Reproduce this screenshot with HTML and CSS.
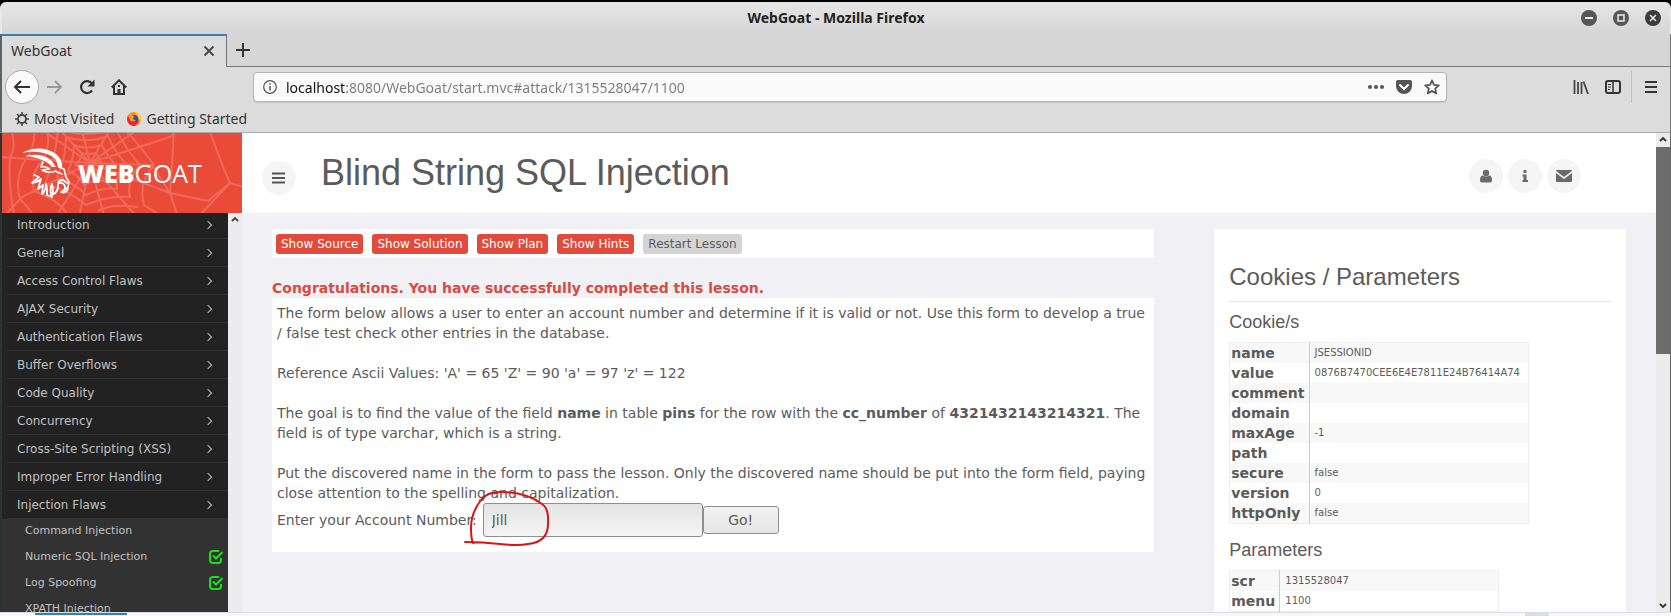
FILE: index.html
```
<!DOCTYPE html>
<html lang="en">
<head>
    <meta charset="UTF-8">
    <meta name="viewport" content="width=device-width, initial-scale=1.0">
    <title>WebGoat</title>
    <link rel="stylesheet" href="styles.css">
</head>
<body>

    <div class="window">
        <header class="titlebar">
            <span class="window-title">WebGoat - Mozilla Firefox</span>
            <div class="window-controls">
                <button aria-label="Minimize"><svg width="16" height="16" viewBox="0 0 16 16"><circle cx="8" cy="8" r="8" fill="#575757"/><path d="M4 8h8" stroke="#eee" stroke-width="2"/></svg></button>
                <button aria-label="Maximize"><svg width="16" height="16" viewBox="0 0 16 16"><circle cx="8" cy="8" r="8" fill="#575757"/><rect x="5" y="5" width="6" height="6" fill="none" stroke="#eee" stroke-width="1.5"/></svg></button>
                <button aria-label="Close"><svg width="16" height="16" viewBox="0 0 16 16"><circle cx="8" cy="8" r="8" fill="#3c3c3c"/><path d="M5 5l6 6M11 5l-6 6" stroke="#eee" stroke-width="1.5"/></svg></button>
            </div>
        </header>

        <div class="tabs">
            <div class="tab">
                <span>WebGoat</span>
                <button aria-label="Close tab"><svg width="12" height="12" viewBox="0 0 12 12"><path d="M1.500 1.500l9 9M10.500 1.500l-9 9" stroke="#444" stroke-width="1.800"/></svg></button>
            </div>
            <div class="tabs-rest">
                <button aria-label="New tab"><svg width="14" height="14" viewBox="0 0 14 14"><path d="M7 0v14M0 7h14" stroke="#333" stroke-width="2"/></svg></button>
            </div>
        </div>

        <div class="toolbar">
            <button class="back" aria-label="Back"><svg width="18" height="16" viewBox="0 0 18 16"><path d="M17 8H2M8 2L2 8l6 6" fill="none" stroke="#333" stroke-width="2"/></svg></button>
            <button class="tool" aria-label="Forward"><svg width="16" height="16" viewBox="0 0 16 16"><path d="M0 8h14M8 2l6 6-6 6" fill="none" stroke="#999" stroke-width="1.800"/></svg></button>
            <button class="tool" aria-label="Reload"><svg width="16" height="16" viewBox="0 0 16 16"><path d="M13 11.500A6 6 0 1 1 12.500 4" fill="none" stroke="#333" stroke-width="2.200"/><path d="M15.500 .5v7H8.500z" fill="#333"/></svg></button>
            <button class="tool" aria-label="Home"><svg width="16" height="16" viewBox="0 0 16 16"><path d="M.8 8.500L8 1.300l7.200 7.200M3 7v8h10V7" fill="none" stroke="#333" stroke-width="2"/><path d="M6.500 15v-5h3v5M7 6h2v2H7z" fill="#333"/></svg></button>
            <div class="spacer"></div>
            <div class="urlbar">
                <svg width="14" height="14" viewBox="0 0 14 14"><circle cx="7" cy="7" r="6.300" fill="none" stroke="#555" stroke-width="1.200"/><path d="M7 6v4.500M7 3.200v1.600" stroke="#555" stroke-width="1.500"/></svg>
                <input type="text" aria-label="Address" value="localhost:8080/WebGoat/start.mvc#attack/1315528047/1100">
                <button aria-label="Page actions"><svg width="16" height="16" viewBox="0 0 16 16" fill="#555"><circle cx="2" cy="8" r="2"/><circle cx="8" cy="8" r="2"/><circle cx="14" cy="8" r="2"/></svg></button>
                <button aria-label="Save to Pocket"><svg width="16" height="16" viewBox="0 0 16 16"><path d="M2 1h12q2 0 2 2v4a8 8 0 0 1-16 0V3q0-2 2-2z" fill="#555"/><path d="M4 6l4 4 4-4" fill="none" stroke="#fff" stroke-width="2" stroke-linecap="round"/></svg></button>
                <button aria-label="Bookmark this page"><svg width="16" height="16" viewBox="0 0 16 16"><path d="M8 1.500l2 4.400 4.800.5-3.600 3.200 1 4.800L8 12l-4.200 2.400 1-4.800L1.200 6.400 6 5.900z" fill="none" stroke="#555" stroke-width="1.800" stroke-linejoin="round"/></svg></button>
            </div>
            <div class="spacer"></div>
            <button class="tool" aria-label="Library"><svg width="16" height="16" viewBox="0 0 16 16"><path d="M1.500 1v14M5 3v12M8.500 3v12M10.500 2.500L15 15" stroke="#444" stroke-width="1.800"/></svg></button>
            <button class="tool" aria-label="Sidebars"><svg width="16" height="16" viewBox="0 0 16 16"><rect x="1" y="2" width="14" height="12" rx="2" fill="none" stroke="#333" stroke-width="2"/><path d="M8 2v12" stroke="#333" stroke-width="1.500"/><path d="M3 5.500h3M3 8h3M3 10.500h2" stroke="#333"/></svg></button>
            <button class="tool menu" aria-label="Open menu"><svg width="12" height="14" viewBox="0 0 12 14"><path d="M0 2h12M0 7h12M0 12h12" stroke="#333" stroke-width="2"/></svg></button>
        </div>

        <nav class="bookmarks">
            <a href="#"><svg width="14" height="14" viewBox="0 0 14 14"><circle cx="7" cy="7" r="4" fill="none" stroke="#444" stroke-width="1.800"/><path d="M7 0v3M7 11v3M0 7h3M11 7h3M2 2l2 2M10 10l2 2M12 2l-2 2M4 10l-2 2" stroke="#444" stroke-width="1.600"/></svg>Most Visited</a>
            <a href="#"><svg width="14" height="14" viewBox="0 0 14 14"><circle cx="7" cy="7" r="7" fill="#ff8a1e"/><path d="M7 14A7 7 0 0 1 1 3.500Q3 9 7 9t5-3q.5 4-2 6-1.500 2-3 2z" fill="#e8283c"/><circle cx="7.500" cy="6.500" r="3.600" fill="#2a4fb0"/><path d="M2 3q2-1 4 1l2 1-2 1q0 2 3 2-3 3-6 0z" fill="#ff9d20"/><path d="M7 0q6 0 7 6-1 3-2 4 0-6-5-10z" fill="#ffd02e"/></svg>Getting Started</a>
        </nav>

        <div class="page">
            <div class="app">
                <aside class="sidebar">
                    <div class="brand">
                        <svg class="web" viewBox="0 0 240 80" preserveAspectRatio="xMidYMid slice" fill="none" stroke="#f2695b" stroke-width="2">
                            <path d="M88 30L30-10M88 30L52-10M88 30L78-10M88 30L112-10M88 30L145-10M88 30L168 4L176-4M88 30L150 32L168 60L206 68L228 50L242 54M88 30L168 60M88 30L140 90M88 30L104 90M88 30L76 90M88 30L50 90M88 30L20 64L-4 90M88 30L-4 24"/>
                            <path d="M80 20Q86 22 94 20Q98 26 100 32Q94 36 96 42Q88 39 82 42Q80 35 74 32Q79 26 80 20z"/>
                            <path d="M72 12Q85 17 100 12Q104 21 112 30Q103 37 104 48Q93 46 82 52Q78 43 66 38Q72 25 72 12z"/>
                            <path d="M64 4Q84 11 106 3Q112 18 124 31Q113 42 115 56Q100 54 84 62Q74 51 55 44Q64 25 64 4z"/>
                            <path d="M56-4Q82 6 114-4Q122 14 138 32Q124 47 128 64Q106 62 84 72Q68 58 43 51Q54 24 56-4z"/>
                            <path d="M44-4Q50 12 40 28Q28 40 32 58Q56 66 66 82M122-4Q138 12 152 32Q136 50 142 72L158 82M96 78Q110 70 136 74"/>
                            <path d="M32-4Q34 12 24 26Q12 44 18 66Q28 76 32 84M10 0Q14 14 8 25Q6 48 12 82M172-4L170 32L168 60L176 84M206-6L222 36L228 50L196 84"/>
                        </svg>
                        <a class="logo" href="#">
                            <svg width="50" height="52" viewBox="0 0 50 52" fill="none" stroke="#fff" stroke-linecap="round" stroke-linejoin="round">
                                <path d="M1 6Q14-1 27 3Q42 8 41 21L37 20Q36 10 26 7Q14 3 1 6z" fill="#fff" stroke="none"/>
                                <path d="M4 9Q20 5 30 13L35 20L31 20Q24 11 4 9z" fill="#fff" stroke="none"/>
                                <path d="M22 15L20 20Q26 19 28 22L21 23Q27 27 35 24M38 20L43 22L45 30L48 35L47 40L43 43M36 25L41 27" stroke-width="1.600"/>
                                <path d="M13 28L18 30L11 36Q17 35 20 32L17 42L22 38L21 47Q25 44 25 37Q27 42 26 48L31 50Q28 43 31 37Q33 43 31 48Q38 45 37 37Q37 33 42 33L46 36M38 36Q43 35 44 40Q44 44 40 45Q44 47 47 42" stroke-width="1.800"/>
                            </svg>
                            <span><strong>WEB</strong>GOAT</span>
                        </a>
                    </div>
                    <div class="menu-scroll">
                        <nav class="lessons">
                            <ul class="categories">
                                <li><a href="#">Introduction</a></li>
                                <li><a href="#">General</a></li>
                                <li><a href="#">Access Control Flaws</a></li>
                                <li><a href="#">AJAX Security</a></li>
                                <li><a href="#">Authentication Flaws</a></li>
                                <li><a href="#">Buffer Overflows</a></li>
                                <li><a href="#">Code Quality</a></li>
                                <li><a href="#">Concurrency</a></li>
                                <li><a href="#">Cross-Site Scripting (XSS)</a></li>
                                <li><a href="#">Improper Error Handling</a></li>
                                <li><a href="#">Injection Flaws</a></li>
                            </ul>
                            <ul class="sub-lessons">
                                <li><a href="#">Command Injection</a></li>
                                <li><a href="#">Numeric SQL Injection</a><svg width="14" height="14" viewBox="0 0 14 14" fill="none" stroke="#1be01b" stroke-width="2"><path d="M10 1H4Q1 1 1 4v6q0 3 3 3h5q3 0 3-3V8"/><path d="M4 5.500l3 3L13.500 2"/></svg></li>
                                <li><a href="#">Log Spoofing</a><svg width="14" height="14" viewBox="0 0 14 14" fill="none" stroke="#1be01b" stroke-width="2"><path d="M10 1H4Q1 1 1 4v6q0 3 3 3h5q3 0 3-3V8"/><path d="M4 5.500l3 3L13.500 2"/></svg></li>
                                <li><a href="#">XPATH Injection</a></li>
                            </ul>
                        </nav>
                        <div class="scrollbar">
                            <svg class="arrow" width="14" height="14" viewBox="0 0 14 14"><path d="M4 8l3-3 3 3" fill="none" stroke="#444" stroke-width="1.800"/></svg>
                        </div>
                    </div>
                </aside>

                <main class="main">
                    <div class="main-header">
                        <button class="round" aria-label="Toggle menu"><svg width="14" height="12" viewBox="0 0 14 12"><path d="M0 1.500h13M0 6h13M0 10.500h13" stroke="#555" stroke-width="1.800"/></svg></button>
                        <h1>Blind String SQL Injection</h1>
                        <div class="user-nav">
                            <button class="round" aria-label="User"><svg width="14" height="14" viewBox="0 0 14 14" fill="#6a6a6a"><circle cx="7" cy="4" r="3.200"/><path d="M4 6.500q3 2 6 0 3 0 3 4.500 0 2.500-2 2.500H3q-2 0-2-2.500 0-4.500 3-4.500z"/></svg></button>
                            <button class="round" aria-label="About"><svg width="8" height="14" viewBox="0 0 8 14" fill="#6a6a6a"><path d="M2.500 1h3v3h-3zM1.500 5.500h4v5.500h1.500v2h-5.500v-2h1V7.500h-1z"/></svg></button>
                            <button class="round" aria-label="Contact"><svg width="16" height="12" viewBox="0 0 16 12" fill="#6a6a6a"><path d="M1 0h14q1 0 1 1L8 7 0 1q0-1 1-1z"/><path d="M0 3l8 6 8-6v8q0 1-1 1H1q-1 0-1-1z"/></svg></button>
                        </div>
                    </div>

                    <div class="content">
                        <section>
                            <div class="lesson-buttons">
                                <button>Show Source</button>
                                <button>Show Solution</button>
                                <button>Show Plan</button>
                                <button>Show Hints</button>
                                <button class="restart">Restart Lesson</button>
                            </div>
                            <p class="feedback">Congratulations. You have successfully completed this lesson.</p>
                            <div class="lesson">
                                <p>The form below allows a user to enter an account number and determine if it is valid or not. Use this form to develop a true / false test check other entries in the database.</p>
                                <p>Reference Ascii Values: 'A' = 65 'Z' = 90 'a' = 97 'z' = 122</p>
                                <p>The goal is to find the value of the field <b>name</b> in table <b>pins</b> for the row with the <b>cc_number</b> of <b>4321432143214321</b>. The field is of type varchar, which is a string.</p>
                                <p>Put the discovered name in the form to pass the lesson. Only the discovered name should be put into the form field, paying close attention to the spelling and capitalization.</p>
                                <form class="account-form">
                                    <label for="account">Enter your Account Number:</label>
                                    <div class="field">
                                        <input id="account" type="text" value="Jill">
                                        <svg class="mark" width="96" height="64" viewBox="0 0 96 64"><path d="M5 56Q22 56 40 58T68 58Q88 56 88 38Q89 22 82 18Q66 6 40 6Q27 6 21 14Q11 27 11 42Q11 53 13 57" fill="none" stroke="#dc1216" stroke-width="2" stroke-linecap="round"/></svg>
                                    </div>
                                    <button type="button">Go!</button>
                                </form>
                            </div>
                        </section>

                        <aside class="info">
                            <h2>Cookies / Parameters</h2>
                            <h3>Cookie/s</h3>
                            <table class="cookies">
                                <tr><th scope="row">name</th><td>JSESSIONID</td></tr>
                                <tr><th scope="row">value</th><td>0876B7470CEE6E4E7811E24B76414A74</td></tr>
                                <tr><th scope="row">comment</th><td></td></tr>
                                <tr><th scope="row">domain</th><td></td></tr>
                                <tr><th scope="row">maxAge</th><td>-1</td></tr>
                                <tr><th scope="row">path</th><td></td></tr>
                                <tr><th scope="row">secure</th><td>false</td></tr>
                                <tr><th scope="row">version</th><td>0</td></tr>
                                <tr><th scope="row">httpOnly</th><td>false</td></tr>
                            </table>
                            <h3>Parameters</h3>
                            <table class="params">
                                <tr><th scope="row">scr</th><td>1315528047</td></tr>
                                <tr><th scope="row">menu</th><td>1100</td></tr>
                            </table>
                        </aside>
                    </div>
                </main>
            </div>

            <div class="scrollbar">
                <svg class="arrow" width="14" height="14" viewBox="0 0 14 14"><path d="M4 8l3-3 3 3" fill="none" stroke="#333" stroke-width="1.800"/></svg>
                <div class="track"><div class="thumb"></div></div>
                <svg class="arrow" width="14" height="14" viewBox="0 0 14 14"><path d="M4 6l3 3 3-3" fill="none" stroke="#333" stroke-width="1.800"/></svg>
            </div>
        </div>

        <div class="panel-edge">
            <div class="active-task"></div>
            <div class="task"></div>
        </div>
    </div>

</body>
</html>
```
FILE: styles.css
```
:root {
    --chrome-color: #dcdcdc;
    --accent-color: #ea4b38;
    --page-color: #f0f0f5;
    --text-color: #5b5b5b;
    --track-color: #ececee;
}

* {
    box-sizing: border-box;
}

body {
    margin: 0;
    background-color: #000;
    font-family: "DejaVu Sans", sans-serif;
    font-size: 14px;
    line-height: 20px;
    color: var(--text-color);
}

button, input {
    font: inherit;
    color: inherit;
    margin: 0;
}

button {
    display: flex;
    align-items: center;
    justify-content: center;
    padding: 0;
    border: none;
    background: none;
    cursor: pointer;
}

a {
    color: inherit;
    text-decoration: none;
}

svg {
    flex-shrink: 0;
}

.window {
    display: flex;
    flex-direction: column;
    height: 100vh;
    padding-top: 2px;
    overflow: hidden;
}

/* browser chrome */

.titlebar, .tabs, .toolbar, .bookmarks {
    flex-shrink: 0;
    font-family: "Noto Sans", sans-serif;
    color: #333;
    border-left: 2px solid #5c6468;
    border-right: 1px solid #777;
}

.titlebar {
    display: grid;
    grid-template-columns: 1fr auto 1fr;
    align-items: center;
    height: 32px;
    padding: 0 9px;
    border-radius: 6px 6px 0 0;
    border-color: #e8e8e8;
    background: linear-gradient(#e6e6e6, #d6d6d6);
}

.window-title {
    grid-column: 2;
    font-size: 14px;
    font-weight: bold;
    color: #222;
}

.window-controls {
    display: flex;
    justify-content: flex-end;
    gap: 16px;
}

.tabs {
    display: flex;
    height: 33px;
    background-color: #d6d6d6;
}

.tab {
    display: flex;
    align-items: center;
    justify-content: space-between;
    width: 225px;
    padding: 0 11px 2px 9px;
    border-top: 2px solid #3a83aa;
    border-right: 1px solid #777;
    background-color: var(--chrome-color);
}

.tabs-rest {
    display: flex;
    flex: 1;
    padding-left: 9px;
    border-bottom: 1px solid #777;
}

.toolbar {
    display: flex;
    align-items: center;
    height: 40px;
    padding-left: 3px;
    background-color: var(--chrome-color);
}

.back {
    width: 34px;
    height: 34px;
    border: 1px solid #aaa;
    border-radius: 50%;
    background-color: #fafafa;
}

.tool {
    width: 32px;
    height: 32px;
}

.toolbar .menu {
    width: 39px;
    margin-left: 2px;
    border-left: 1px solid #c2c2c2;
}

.spacer {
    flex: 0 1 118px;
}

.urlbar {
    display: flex;
    flex: 1;
    align-items: center;
    height: 30px;
    padding: 0 6px 0 9px;
    border: 1px solid #b5b5b5;
    border-radius: 4px;
    background-color: #fafafa;
    box-shadow: 0 1px 1px rgba(0, 0, 0, 0.1);
}

.urlbar input {
    flex: 1;
    min-width: 0;
    height: 28px;
    margin-left: 9px;
    padding: 0;
    border: none;
    outline: none;
    /* host part stays dark, the rest of the address is dimmed */
    background: linear-gradient(to right, #111 60px, #7c7c7c 60px);
    -webkit-background-clip: text;
    background-clip: text;
    color: transparent;
}

.urlbar button {
    margin-left: 12px;
}

.bookmarks {
    display: flex;
    gap: 13px;
    height: 26px;
    padding: 0 0 2px 13px;
    border-bottom: 1px solid #aaa;
    background-color: var(--chrome-color);
}

.bookmarks a {
    display: flex;
    align-items: center;
    gap: 5px;
}

/* page */

.page {
    display: flex;
    flex: 1;
    min-height: 0;
    border-left: 2px solid #2b3236;
    border-right: 1px solid #666;
    background-color: var(--page-color);
}

.app {
    display: flex;
    flex: 1;
    min-width: 0;
    overflow: hidden;
}

.scrollbar {
    display: flex;
    flex: 0 0 14px;
    flex-direction: column;
    background-color: var(--track-color);
}

.track {
    flex: 1;
}

.thumb {
    height: 46%;
    background-color: #6c6c6c;
}

.sidebar {
    display: flex;
    flex: 0 0 240px;
    flex-direction: column;
    overflow: hidden;
}

.brand {
    position: relative;
    flex-shrink: 0;
    height: 80px;
    background-color: var(--accent-color);
    overflow: hidden;
}

.web {
    position: absolute;
    inset: 0;
    width: 100%;
    height: 100%;
}

.logo {
    position: relative;
    display: flex;
    align-items: center;
    gap: 7px;
    height: 80px;
    padding-left: 19px;
    font-family: "Open Sans", sans-serif;
    font-size: 25px;
    font-weight: 400;
    color: #fff;
}

.logo strong {
    font-weight: 800;
}

.menu-scroll {
    display: flex;
    flex: 1;
    min-height: 0;
}

.lessons {
    flex: 1;
    background-color: #323232;
    color: #c0c0c0;
    overflow: hidden;
}

.lessons ul {
    margin: 0;
    padding: 0;
    list-style: none;
}

/* menu is scrolled down by a few pixels */
.lessons .categories {
    margin-top: -2px;
    padding-left: 5px;
    background-color: #222;
    font-size: 12px;
}

.categories li {
    border-bottom: 1px solid #313131;
}

.categories a {
    display: flex;
    align-items: center;
    justify-content: space-between;
    height: 27px;
    padding: 0 17px 0 10px;
}

.categories a::after {
    content: "";
    width: 5px;
    height: 5px;
    border-top: 1px solid #bbb;
    border-right: 1px solid #bbb;
    transform: rotate(45deg);
}

.sub-lessons li {
    display: flex;
    align-items: center;
    justify-content: space-between;
    height: 26px;
    padding: 0 5px 2px 23px;
    font-size: 11px;
}

.main {
    flex: 1;
    min-width: 0;
}

.main-header {
    display: flex;
    align-items: center;
    height: 80px;
    padding: 0 75px 0 20px;
    background-color: #fff;
}

.round {
    width: 34px;
    height: 34px;
    border-radius: 50%;
    background-color: #f5f5f5;
}

.main-header > .round {
    margin-top: 10px;
}

h1, h2, h3 {
    margin: 0;
    font-family: "Liberation Sans", Arial, sans-serif;
    font-weight: normal;
}

h1 {
    margin-left: 25px;
    font-size: 36px;
    line-height: 40px;
}

.user-nav {
    display: flex;
    gap: 5px;
    margin-top: 5px;
    margin-left: auto;
}

.content {
    display: grid;
    grid-template-columns: 15fr 7fr;
    gap: 60px;
    padding: 16px 30px 0;
}

.lesson-buttons {
    display: flex;
    gap: 9px;
    padding: 5px 4px 4px;
    background-color: #fff;
}

.lesson-buttons button {
    height: 20px;
    padding: 0 5px;
    border-radius: 3px;
    background-color: #e04b3c;
    font-size: 12px;
    color: #fff;
}

.lesson-buttons .restart {
    background-color: #d4d4d4;
    color: #5b5b5b;
}

.feedback {
    margin: 20px 0 0;
    font-weight: bold;
    color: #d84c41;
}

.lesson {
    padding: 5px 5px 15px;
    background-color: #fff;
}

.lesson p {
    margin: 0 0 20px;
}

.lesson p:last-of-type {
    margin-bottom: 0;
}

.account-form {
    display: flex;
    align-items: center;
}

.field {
    position: relative;
    margin-left: 6px;
}

.field input {
    display: block;
    width: 220px;
    height: 34px;
    padding: 0 8px;
    border: 1px solid #8f8f8f;
    border-radius: 3px;
    background: linear-gradient(#e4e4e4, #f4f4f4);
}

/* hand-drawn ring around the answer */
.mark {
    position: absolute;
    top: -17px;
    left: -23px;
    pointer-events: none;
}

.account-form button {
    width: 76px;
    height: 28px;
    border: 1px solid #8f8f8f;
    border-radius: 3px;
    background: linear-gradient(#f2f2f2, #e6e6e6);
}

.info {
    height: 600px;
    padding: 32px 15px;
    background-color: #fff;
}

.info h2 {
    padding-bottom: 8px;
    border-bottom: 1px solid #e8e8e8;
    font-size: 24px;
    line-height: 32px;
}

.info h3 {
    margin: 10px 0;
    font-size: 18px;
    line-height: 20px;
}

.info table + h3 {
    margin-top: 16px;
}

.info table {
    width: 300px;
    border: 1px solid #eee;
    border-collapse: collapse;
}

.info .params {
    width: 270px;
}

.info tr:nth-child(odd) {
    background-color: #f8f8f8;
}

.info th {
    width: 1px;
    height: 20px;
    padding: 0 4px 0 1px;
    border-right: 1px solid #ccc;
    text-align: left;
}

.info td {
    padding: 0 5px;
    font-size: 10px;
    line-height: 20px;
}

/* desktop panel showing below the window */

.panel-edge {
    display: flex;
    flex-shrink: 0;
    justify-content: space-between;
    height: 4px;
    padding: 0 122px 0 35px;
    border-top: 1px solid #ddd;
    background-color: #f8f8fa;
}

.active-task {
    width: 92px;
    height: 2px;
    background-color: #2684c0;
}

.task {
    width: 24px;
    background-color: #dcdce4;
}
```
